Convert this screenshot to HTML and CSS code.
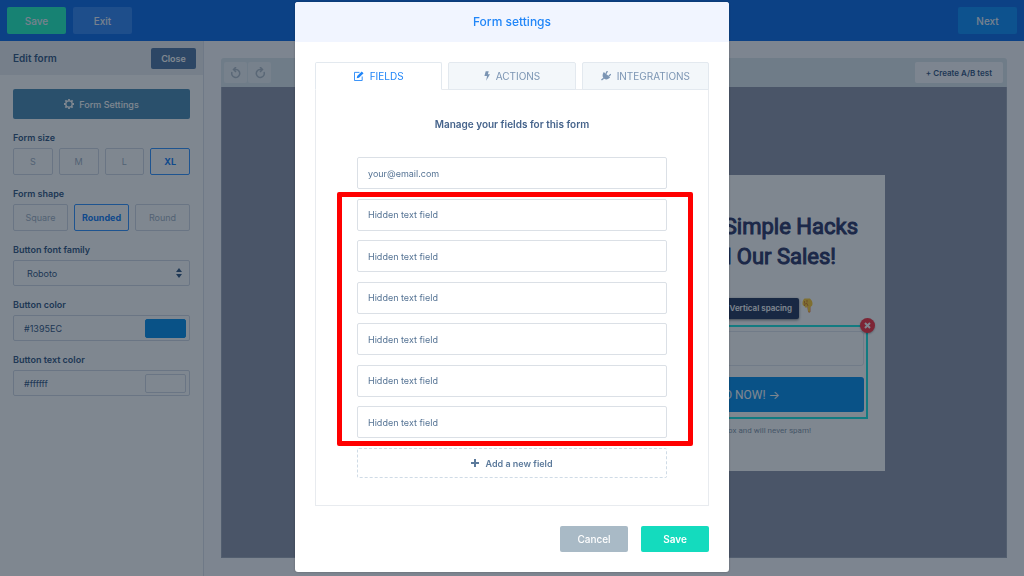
FILE: index.html
```html
<!DOCTYPE html>
<html lang="en">
<head>
  <meta charset="UTF-8" />
  <meta name="viewport" content="width=device-width, initial-scale=1.0" />
  <title>Form settings</title>
  <link rel="stylesheet" href="styles.css">
</head>
<body>

  <!-- Top bar -->
  <header class="topbar">
    <button class="btn btn-save">Save</button>
    <button class="btn btn-exit">Exit</button>
    <button class="btn btn-next">Next</button>
  </header>

  <div class="layout">
    <!-- Sidebar -->
    <aside class="sidebar">
      <div class="sidebar-head">
        <h2>Edit form</h2>
        <button class="btn-close">Close</button>
      </div>
      <div class="sidebar-body">
        <button class="btn-settings">
          <svg width="10" height="10" viewBox="0 0 22 22" fill="none" stroke="currentColor">
            <circle cx="11" cy="11" r="7" stroke-width="3" />
            <path stroke-width="4" d="M11 0v4M11 18v4M0 11h4M18 11h4M3 3l3 3M16 16l3 3M3 19l3-3M16 6l3-3" />
          </svg>
          Form Settings
        </button>

        <div class="group">
          <span class="label">Form size</span>
          <div class="options">
            <button>S</button>
            <button>M</button>
            <button>L</button>
            <button class="active">XL</button>
          </div>
        </div>

        <div class="group">
          <span class="label">Form shape</span>
          <div class="options">
            <button>Square</button>
            <button class="active">Rounded</button>
            <button>Round</button>
          </div>
        </div>

        <div class="group">
          <label class="label" for="font">Button font family</label>
          <div class="control">
            <select id="font"><option>Roboto</option></select>
            <svg width="6" height="12" viewBox="0 0 6 12" fill="currentColor"><path d="M3 1l3 4H0zM3 11l3-4H0z" /></svg>
          </div>
        </div>

        <div class="group">
          <label class="label" for="color">Button color</label>
          <div class="control">
            <input type="text" id="color" value="#1395EC" />
            <span class="swatch swatch-blue"></span>
          </div>
        </div>

        <div class="group">
          <label class="label" for="textColor">Button text color</label>
          <div class="control">
            <input type="text" id="textColor" value="#ffffff" />
            <span class="swatch"></span>
          </div>
        </div>
      </div>
    </aside>

    <!-- Preview -->
    <main class="workspace">
      <div class="toolbar">
        <div class="history">
          <button aria-label="Undo">
            <svg width="12" height="12" viewBox="0 0 24 24" fill="none" stroke="currentColor" stroke-width="3"><path d="M4 10a8 8 0 1 0 8-5H8M12 0L7 5l5 5" /></svg>
          </button>
          <button aria-label="Redo">
            <svg width="12" height="12" viewBox="0 0 24 24" fill="none" stroke="currentColor" stroke-width="3"><path d="M20 10a8 8 0 1 1-8-5h4M12 0l5 5-5 5" /></svg>
          </button>
        </div>
        <button class="btn-test">+ Create A/B test</button>
      </div>
      <div class="canvas">
        <div class="card">
          <h1><span>27 Simple Hacks</span><span class="second">That Doubled Our Sales!</span></h1>
          <div class="optin">
            <div class="tooltip">Vertical spacing</div>
            <svg class="finger" width="11" height="15" viewBox="0 0 22 30">
              <path fill="#f08a4b" d="M10 14h7v13c0 3-5 3-5 0z" />
              <path fill="#ffcf3f" d="M5 1h11c3 3 5 6 5 10 0 3-1 5-3 6l-2 1v8c0 2-4 2-4 0V16l-2 3H6l-1-3c-3 0-4-2-4-5 0-4 1-8 4-10z" />
              <path fill="none" stroke="#d98a35" stroke-width="2" d="M5 16c0-4 1-5 5-5l2 5M5 6v5M10 4v5" />
            </svg>
            <button class="remove" aria-label="Remove">
              <svg width="7" height="7" viewBox="0 0 7 7" stroke="currentColor" stroke-width="2"><path d="M1 1l5 5M6 1L1 6" /></svg>
            </button>
            <input type="text" aria-label="Email" />
            <button class="cta">DOWNLOAD NOW! →</button>
          </div>
          <p class="note">We respect your inbox and will never spam!</p>
        </div>
      </div>
    </main>
  </div>

  <!-- Modal -->
  <div class="overlay">
    <div class="modal" role="dialog" aria-labelledby="modalTitle">
      <h2 class="modal-title" id="modalTitle">Form settings</h2>
      <div class="modal-body">
        <div class="tabs">
          <button class="tab active">
            <svg width="10" height="10" viewBox="0 0 22 22" fill="none" stroke="currentColor" stroke-width="2">
              <path d="M12 3H1v18h17v-9" />
              <path fill="currentColor" stroke="none" d="M7 11L17 1l4 4-10 10-5 1z" />
            </svg>
            FIELDS
          </button>
          <button class="tab">
            <svg width="6" height="10" viewBox="0 0 14 22" fill="currentColor"><path d="M4 0h7L9 7h5L5 22l2-11H1z" /></svg>
            ACTIONS
          </button>
          <button class="tab">
            <svg width="10" height="10" viewBox="0 0 22 22" fill="currentColor" stroke="currentColor">
              <path stroke="none" d="M6 2l14 12c-4 5-9 6-13 3-4-3-5-9-1-15z" />
              <path fill="none" stroke-width="3" d="M11 6l3-6M17 11l5-4M6 16l-5 4" />
            </svg>
            INTEGRATIONS
          </button>
        </div>
        <div class="panel">
          <h3>Manage your fields for this form</h3>
          <div class="fields">
            <input type="text" aria-label="Email field" value="your@email.com" />
            <input type="text" aria-label="Field 1" value="Hidden text field" />
            <input type="text" aria-label="Field 2" value="Hidden text field" />
            <input type="text" aria-label="Field 3" value="Hidden text field" />
            <input type="text" aria-label="Field 4" value="Hidden text field" />
            <input type="text" aria-label="Field 5" value="Hidden text field" />
            <input type="text" aria-label="Field 6" value="Hidden text field" />
            <div class="highlight"></div>
          </div>
          <button class="btn-add">
            <svg width="8" height="8" viewBox="0 0 8 8" stroke="currentColor" stroke-width="2"><path d="M4 0v8M0 4h8" /></svg>
            Add a new field
          </button>
        </div>
        <div class="modal-actions">
          <button class="btn-cancel">Cancel</button>
          <button class="btn-confirm">Save</button>
        </div>
      </div>
    </div>
  </div>

</body>
</html>
```
FILE: styles.css
```css
* {
  box-sizing: border-box;
}
body {
  margin: 0;
  height: 100vh;
  display: flex;
  flex-direction: column;
  overflow: hidden;
  font-family: Inter, 'Liberation Sans', sans-serif;
  font-size: 9px;
  color: #3f6189;
  background-color: #fff;
}
button, input, select {
  font: inherit;
  color: inherit;
  margin: 0;
}
button {
  display: flex;
  align-items: center;
  justify-content: center;
  padding: 0;
  border: none;
  border-radius: 2px;
  cursor: pointer;
}
h1, h2, h3, p {
  margin: 0;
}

/* top bar */
.topbar {
  display: flex;
  gap: 7px;
  height: 41px;
  padding: 7px;
  background-color: #1973e8;
}
.btn {
  width: 59px;
  height: 27px;
  font-size: 10px;
  font-weight: 500;
  color: #eef3fa;
}
.btn-save {
  background-color: #2ef5c5;
}
.btn-exit {
  background-color: #3d8cf5;
}
.btn-next {
  margin-left: auto;
  background-color: #1b95fa;
}

.layout {
  flex: 1;
  display: flex;
  min-height: 0;
}

/* sidebar */
.sidebar {
  width: 204px;
  border-right: 1px solid #dfe3ec;
}
.sidebar-head {
  display: flex;
  align-items: center;
  justify-content: space-between;
  height: 34px;
  padding: 0 7px 0 13px;
  background-color: #eceff3;
}
.sidebar-head h2 {
  font-size: 10px;
  font-weight: 600;
}
.btn-close {
  width: 45px;
  height: 21px;
  font-weight: 600;
  color: #fff;
  background-color: #587da8;
}
.sidebar-body {
  padding: 14px 13px;
}
.btn-settings {
  gap: 5px;
  width: 100%;
  height: 30px;
  margin-bottom: 12px;
  font-weight: 500;
  color: #fff;
  background-color: #5591b7;
}
.group {
  margin-bottom: 12px;
}
.label {
  display: block;
  margin-bottom: 3px;
  line-height: 14px;
  font-weight: 600;
}
.options {
  display: flex;
  gap: 6px;
}
.options button {
  flex: 1;
  height: 27px;
  border: 1px solid #d5dbe6;
  color: #a6b4c6;
  background-color: #fff;
}
.options .active {
  border-color: #3c98ff;
  font-weight: 700;
  color: #2283f5;
}
.control {
  display: flex;
  align-items: center;
  height: 26px;
  padding: 0 3px 0 10px;
  border: 1px solid #d5dbe6;
  border-radius: 2px;
}
.control select, .control input {
  flex: 1;
  min-width: 0;
  padding: 0;
  border: none;
  outline: none;
  appearance: none;
  background: none;
}
.control select {
  margin-left: 3px;
}
.control svg {
  margin-right: 4px;
}
.swatch {
  width: 41px;
  height: 19px;
  border: 1px solid #d5dbe6;
  border-radius: 2px;
}
.swatch-blue {
  border-color: #1395ec;
  background-color: #1395ec;
}

/* preview */
.workspace {
  flex: 1;
  display: flex;
  flex-direction: column;
  padding: 17px 17px 18px;
  background-color: #fbfbff;
}
.toolbar {
  flex-shrink: 0;
  display: flex;
  align-items: center;
  justify-content: space-between;
  height: 29px;
  padding: 0 4px 0 3px;
  border-radius: 3px 3px 0 0;
  background-color: #dfe8ee;
}
.history {
  display: flex;
  gap: 1px;
}
.history button {
  width: 23px;
  height: 21px;
  color: #b4bfcb;
  background-color: #eef3f7;
}
.btn-test {
  height: 21px;
  padding: 0 11px;
  font-size: 8px;
  font-weight: 600;
  background-color: #fbfbff;
}
.canvas {
  flex: 1;
  min-height: 0;
  padding-top: 88px;
  border: 1px solid #a5adbd;
  border-top: none;
  background-color: #949bae;
}
.card {
  width: 542px;
  max-width: 100%;
  margin: 0 auto;
  padding: 37px 17px 34px;
  background-color: #fff;
  font-family: Roboto, Inter, sans-serif;
}
.card h1 {
  padding-right: 10px;
  font-size: 22px;
  font-weight: 400;
  line-height: 30px;
  text-align: right;
  color: #38416f;
  -webkit-text-stroke: 1px #38416f;
}
.card h1 span {
  display: block;
}
.card h1 .second {
  padding-right: 22px;
}
.optin {
  position: relative;
  margin-top: 53px;
  padding: 4px 2px 5px;
  border: 2px solid #27e6e1;
}
.optin input {
  display: block;
  width: 100%;
  height: 35px;
  margin-bottom: 11px;
  border: 1px solid #e2e6ee;
  border-radius: 3px;
}
.tooltip {
  position: absolute;
  top: -29px;
  right: 67px;
  padding: 0 7px;
  border-radius: 2px;
  line-height: 21px;
  font-family: Inter, sans-serif;
  font-size: 8px;
  font-weight: 600;
  white-space: nowrap;
  color: #fff;
  background-color: #304164;
  box-shadow: 0 1px 3px rgba(0, 0, 0, 0.5);
}
.finger {
  position: absolute;
  top: -29px;
  right: 53px;
}
.remove {
  position: absolute;
  top: -9px;
  right: -9px;
  width: 15px;
  height: 15px;
  border-radius: 50%;
  color: #fff;
  background-color: #fa3a48;
  box-shadow: 0 1px 2px rgba(0, 0, 0, 0.3);
}
.cta {
  justify-content: flex-end;
  width: 100%;
  height: 35px;
  padding-right: 84px;
  border-radius: 3px;
  font-size: 12px;
  color: #fff;
  background-color: #1395ec;
}
.note {
  margin-top: 6px;
  padding-right: 57px;
  font-size: 8px;
  line-height: 12px;
  text-align: right;
  color: #8c9cae;
}

/* modal */
.overlay {
  position: fixed;
  inset: 0;
  display: flex;
  align-items: flex-start;
  justify-content: center;
  padding-top: 2px;
  background-color: rgba(0, 15, 33, 0.5);
}
.modal {
  width: 434px;
  border-radius: 3px;
  overflow: hidden;
  background-color: #fff;
  box-shadow: 0 0 2px rgba(0, 0, 0, 0.3);
}
.modal-title {
  font-size: 12px;
  font-weight: 500;
  line-height: 40px;
  text-align: center;
  color: #2186f8;
  background-color: #f1f5ff;
}
.modal-body {
  padding: 20px;
}
.tabs {
  display: flex;
  gap: 6px;
}
.tab {
  position: relative;
  flex: 1;
  gap: 6px;
  height: 28px;
  margin-bottom: -1px;
  border: 1px solid #e3e9ef;
  border-radius: 2px 2px 0 0;
  font-size: 10px;
  color: #7b95b3;
  background-color: #f3f7fa;
}
.tab.active {
  border-bottom-color: #fff;
  color: #2186f8;
  background-color: #fff;
}
.panel {
  padding: 27px 41px;
  border: 1px solid #e8ebef;
}
.panel h3 {
  margin-bottom: 26px;
  font-size: 10px;
  font-weight: 600;
  line-height: 14px;
  text-align: center;
  color: #45638b;
}
.fields {
  position: relative;
  display: flex;
  flex-direction: column;
  justify-content: space-between;
  min-height: 281px;
}
.fields input {
  height: 32px;
  padding: 0 10px;
  border: 1px solid #dbe0e6;
  border-radius: 2px;
  color: #557394;
}
.highlight {
  position: absolute;
  top: 35px;
  right: -26px;
  bottom: -8px;
  left: -20px;
  border: 5px solid #ff0000;
  border-radius: 2px;
  pointer-events: none;
}
.btn-add {
  gap: 6px;
  width: 100%;
  height: 30px;
  margin-top: 10px;
  border: 1px dashed #cfdbe6;
  font-weight: 600;
  color: #5c7a9b;
  background-color: #fff;
}
.modal-actions {
  display: flex;
  justify-content: flex-end;
  gap: 13px;
  margin-top: 20px;
}
.modal-actions button {
  width: 68px;
  height: 26px;
  font-size: 10px;
  font-weight: 600;
  color: #fff;
}
.modal-actions .btn-cancel {
  font-weight: 500;
  background-color: #a9bac6;
}
.modal-actions .btn-confirm {
  background-color: #14dbbe;
}
```
